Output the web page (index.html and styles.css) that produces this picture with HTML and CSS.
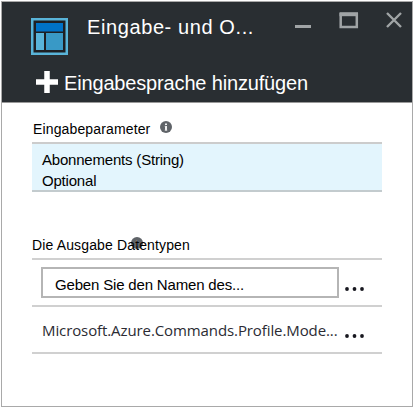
FILE: index.html
```html
<!DOCTYPE html>
<html lang="de">
<head>
<meta charset="utf-8">
<title>Eingabe- und Ausgabe</title>
<link rel="stylesheet" href="styles.css">
</head>
<body>
<main class="blade">
  <header class="header">
    <div class="titlebar">
      <svg class="logo" width="37" height="37" viewBox="0 0 37 37">
        <rect width="37" height="37" fill="#59b4d9"/>
        <rect x="2.5" y="2.5" width="32" height="32" fill="#1e1f23"/>
        <rect x="5" y="5" width="27" height="8.5" fill="#0072c6"/>
        <rect x="5" y="15" width="8" height="17" fill="#59b4d9"/>
        <rect x="15" y="15" width="17" height="17" fill="#3999c6"/>
      </svg>
      <h1 class="title">Eingabe- und O...</h1>
      <svg class="controls" width="110" height="20" viewBox="0 0 110 20">
        <g fill="none" stroke="#a0a4a6">
          <path d="M0 16.5H16" stroke-width="3"/>
          <path d="M44.5 4.2H63" stroke-width="4"/>
          <path d="M45.7 3V17H61.8V3" stroke-width="2.5"/>
          <path d="M92 3L106 17M106 3L92 17" stroke-width="2.4"/>
        </g>
      </svg>
    </div>
    <div class="command">
      <svg class="plus" width="22" height="22" viewBox="0 0 22 22"><path d="M11 0V22M0 11H22" stroke="#fff" stroke-width="5.5"/></svg>
      <span class="command-label">Eingabesprache hinzufügen</span>
    </div>
  </header>
  <section class="inputs">
    <h2 class="label"><span class="label-in">Eingabeparameter</span>
      <svg class="info" width="12" height="12" viewBox="0 0 12 12"><circle cx="6" cy="6" r="6" fill="#5f6368"/><path d="M6 5V9.5M6 2.5V4" fill="none" stroke="#fff" stroke-width="1.8"/><path d="M4.7 5.3H6M4.7 9.2H7.3" stroke="#ddd" stroke-width=".8"/></svg>
    </h2>
    <div class="parameter">
      <div class="name">Abonnements (String)</div>
      <div class="kind">Optional</div>
    </div>
  </section>
  <section class="outputs">
    <h2 class="label output-label"><svg class="info overlap" width="12" height="12" viewBox="0 0 12 12"><circle cx="6" cy="6" r="6" fill="#5f6368"/><path d="M6 3V9" stroke="#aaa" stroke-width="1.2"/></svg><span class="label-out">Die Ausgabe Datentypen</span></h2>
    <div class="row">
      <div class="field"><span class="placeholder">Geben Sie den Namen des...</span></div>
      <svg class="more" width="20" height="4" viewBox="0 0 20 4"><g fill="#17171f"><circle cx="2" cy="2" r="1.9"/><circle cx="9.5" cy="2" r="1.9"/><circle cx="17" cy="2" r="1.9"/></g></svg>
    </div>
    <div class="row">
      <div class="type">Microsoft.Azure.Commands.Profile.Mode...</div>
      <svg class="more" width="20" height="4" viewBox="0 0 20 4"><g fill="#17171f"><circle cx="2" cy="2" r="1.9"/><circle cx="9.5" cy="2" r="1.9"/><circle cx="17" cy="2" r="1.9"/></g></svg>
    </div>
  </section>
</main>
</body>
</html>
```
FILE: styles.css
```css
* { box-sizing: border-box; }
body {
  margin: 0;
  padding: 1px;
  background: #fff;
  color: #000;
  font-family: "Liberation Sans", Arial, sans-serif;
}
h1, h2 { margin: 0; font-weight: normal; }
svg { display: block; flex: none; }
.blade {
  width: 412px;
  height: 406px;
  border: 1px solid #a9a9a9;
}
.header {
  height: 101px;
  background: #292e32;
  border-bottom: 1px solid #999;
  color: #fff;
}
.titlebar { display: flex; height: 68px; padding-left: 29px; }
.logo { margin-top: 16px; }
.title {
  width: 208px;
  margin: 13px 0 0 19px;
  font-size: 20px;
  line-height: 24px;
  letter-spacing: 0.6px;
  white-space: nowrap;
}
.controls { margin-top: 8px; }
.command { display: flex; padding-left: 34px; }
.plus { margin-top: 1px; }
.command-label {
  margin-left: 6px;
  font-size: 20px;
  line-height: 26px;
  letter-spacing: -0.16px;
  white-space: nowrap;
}
.inputs { height: 130px; margin: 0 30px; padding-top: 17px; }
.label {
  display: flex;
  position: relative;
  height: 22px;
  font-size: 14px;
  line-height: 18px;
  letter-spacing: 0.14px;
  white-space: nowrap;
}
.label-in { width: 128px; padding-left: 1px; }
.info { margin-top: 1px; }
.parameter {
  height: 50px;
  padding: 5px 0 0 10px;
  border-top: 2px solid #ccc;
  border-bottom: 2px solid #c3cbce;
  background: #e3f5fd;
  font-size: 15px;
  line-height: 21px;
  letter-spacing: -0.2px;
}
.outputs { margin: 0 30px; }
.output-label { height: 25px; padding-top: 3px; }
.label-out { position: relative; }
.overlap { position: absolute; left: 99px; top: 4px; margin: 0; }
.row {
  display: flex;
  height: 47px;
  padding-left: 9px;
  border-top: 2px solid #d0d0d0;
}
.row:last-child { border-bottom: 2px solid #d0d0d0; height: 49px; }
.field {
  width: 298px;
  height: 31px;
  margin-top: 7px;
  padding-left: 12px;
  border: 2px solid #b5b5b5;
  font-size: 15px;
  line-height: 32px;
  letter-spacing: -0.17px;
}
.type {
  width: 298px;
  padding-left: 1px;
  color: #2b2b33;
  font-family: "Open Sans", "Noto Sans", sans-serif;
  font-size: 15px;
  line-height: 47px;
  letter-spacing: -0.1px;
  white-space: nowrap;
}
.more { margin: 27px 0 0 6px; }
```
